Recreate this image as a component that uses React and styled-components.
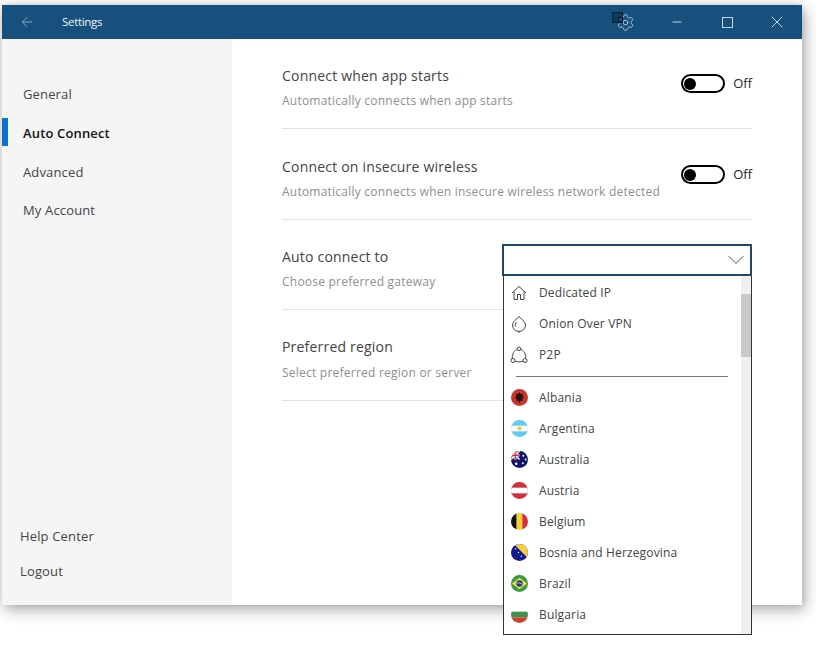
import React from "react";
import styled, { createGlobalStyle } from "styled-components";
import { ArrowLeft, Minus, X, Settings, ChevronDown } from "lucide-react";

const Global = createGlobalStyle`
  html, body { margin: 0; padding: 0; background: #fff; }
  body { font-family: "Open Sans", "Noto Sans", sans-serif; overflow: hidden; }
`;
const Page = styled.div`
  width: 816px; height: 655px; padding: 5px 0 0 2px; box-sizing: border-box;
`;
const Win = styled.div`
  width: 800px; height: 600px; display: flex; flex-direction: column; background: #fff;
  box-shadow: 3px 5px 14px rgba(0,0,0,.32), 0 -1px 6px rgba(0,0,0,.12);
`;
const TitleBar = styled.header`
  height: 34px; flex: none; background: #17507c; color: #f0f5f9; display: flex; align-items: center;
`;
const BackBtn = styled.div`
  width: 60px; padding-left: 17px; box-sizing: border-box; display: flex; color: #7fa6c4;
`;
const TitleText = styled.div`
  font-size: 11.5px; letter-spacing: -.3px; flex: 1; margin-top: -2px;
`;
const TrayIcon = styled.div`
  position: relative; width: 23px; height: 20px; margin-right: 17px; color: #a9c4d8; display: flex; justify-content: flex-end; align-items: center;
`;
const TrayBadge = styled.div`
  position: absolute; left: 0; top: 0; width: 9px; height: 9px; border: 1px solid #0b2436; background: #113a58;
  &::after { content: ""; position: absolute; right: -1px; bottom: 0; width: 3px; height: 3px; border: 1px solid #071a29; background: #17507c; }
`;
const WinBtn = styled.div`
  width: 50px; display: flex; justify-content: center; align-items: center; color: #c2d9ea;
`;
const Body = styled.div`
  flex: 1; display: flex; min-height: 0;
`;
const Side = styled.nav`
  width: 230px; flex: none; background: #f5f5f5; display: flex; flex-direction: column; justify-content: space-between; padding: 36px 0 17px; box-sizing: border-box;
`;
const NavList = styled.div`
  display: flex; flex-direction: column;
`;
const NavItem = styled.div`
  position: relative; height: 38.7px; display: flex; align-items: center; padding-left: 21px;
  font-size: 13px; letter-spacing: .15px; color: ${p => p.$active ? "#111" : "#444"}; font-weight: ${p => p.$active ? 600 : 400};
  box-sizing: border-box;
  ${p => p.$active ? `&::before { content: ""; position: absolute; left: 0; top: 4px; width: 6px; height: 28px; background: #0a74cc; }` : ""}
`;
const BottomLink = styled.div`
  height: 35px; display: flex; align-items: center; padding-left: 18px; font-size: 13px; letter-spacing: .15px; color: #444;
`;
const Main = styled.main`
  flex: 1; padding: 0 50px; min-width: 0;
`;
const Row = styled.section`
  height: ${p => p.$h}px; padding-top: ${p => p.$pad}px; box-sizing: border-box; border-bottom: 1px solid #e3e3e3; display: flex; justify-content: space-between; align-items: flex-start;
`;
const RowText = styled.div`
  display: flex; flex-direction: column; gap: ${p => p.$gap || 6}px;
`;
const RowTitle = styled.div`
  font-size: 14px; line-height: 19px; color: #444; letter-spacing: .2px;
`;
const RowSub = styled.div`
  font-size: 12px; line-height: 19px; color: #8f8f8f; letter-spacing: .23px;
`;
const ToggleWrap = styled.div`
  display: flex; align-items: center; gap: 8px; font-size: 13px; color: #222; margin-top: 8px; font-weight: 500;
`;
const Toggle = styled.div`
  width: 44px; height: 19px; border: 2px solid #000; border-radius: 11px; box-sizing: border-box; padding: 1.5px 1px;
  &::before { content: ""; display: block; width: 12px; height: 12px; background: #000; border-radius: 50%; }
`;
const OffLabel = styled.span`
  margin-top: -2px;
`;
const SelectBox = styled.div`
  position: relative; width: 250px; height: 32px; margin-top: -3px; box-sizing: border-box; border: 2px solid #1f4a68; background: #fff; display: flex; justify-content: flex-end; align-items: center; color: #555;
`;
const Menu = styled.div`
  position: absolute; left: -1px; top: 30px; width: 249px; height: 359px; box-sizing: border-box; background: #fff; border: 1px solid #333; border-top: 0; display: flex; overflow: hidden;
`;
const MenuList = styled.div`
  flex: 1; padding-top: 1px; min-width: 0;
`;
const Option = styled.div`
  height: 31px; display: flex; align-items: center; gap: 11px; padding-left: 6px; font-size: 12px; color: #444; letter-spacing: .15px;
`;
const OptIcon = styled.span`
  width: 18px; height: 18px; display: flex; justify-content: center; align-items: center; color: #444; flex: none;
`;
const MenuSep = styled.div`
  height: 1px; background: #777; margin: 6px 13px 5px 12px;
`;
const Scroll = styled.div`
  width: 10px; flex: none; background: #f0f0f0; padding-top: 18px; box-sizing: border-box;
`;
const Thumb = styled.div`
  height: 63px; background: #c9c9c9;
`;

const flags = {
  al: <><rect width="18" height="18" fill="#c9332a"/><path d="M9 3.500l1.500 2 2.500-.5-1 2.500 2 1.500-2 1 .5 2.500-2.500 0L9 15l-1-2.500-2.500 0 .5-2.500-2-1 2-1.500-1-2.500 2.500.5z" fill="#231512"/></>,
  ar: <><rect width="18" height="18" fill="#5fcbf0"/><rect y="6" width="18" height="6" fill="#fff"/><circle cx="9" cy="9" r="2.200" fill="#eec64c"/></>,
  au: <><rect width="18" height="18" fill="#12156e"/><path d="M0 0l9 9M9 0L0 9" stroke="#fff" strokeWidth="1.500"/><path d="M4.500 0v9M0 4.500h9" stroke="#fff" strokeWidth="2.600"/><path d="M4.500 0v9M0 4.500h9" stroke="#d63040" strokeWidth="1.400"/><circle cx="13" cy="5" r="1" fill="#fff"/><circle cx="15.500" cy="9" r="1" fill="#fff"/><circle cx="12.500" cy="13" r="1" fill="#fff"/><circle cx="5.500" cy="13.500" r="1.400" fill="#fff"/></>,
  at: <><rect width="18" height="18" fill="#d32f3a"/><rect y="6" width="18" height="6" fill="#fff"/></>,
  be: <><rect width="6" height="18" fill="#111"/><rect x="6" width="6" height="18" fill="#f5d438"/><rect x="12" width="6" height="18" fill="#e02a35"/></>,
  ba: <><rect width="18" height="18" fill="#101a8c"/><path d="M3 0H18V15z" fill="#f5cf3a"/><circle cx="5" cy="5" r=".7" fill="#fff"/><circle cx="8" cy="9" r=".7" fill="#fff"/><circle cx="11" cy="13" r=".7" fill="#fff"/></>,
  br: <><rect width="18" height="18" fill="#3d9a3d"/><path d="M9 3L17 9 9 15 1 9z" fill="#f3dd4a"/><circle cx="9" cy="9" r="3.400" fill="#1c3d8b"/><path d="M6 8.500q3-.8 6 1.300" stroke="#fff" strokeWidth=".7" fill="none"/></>,
  bg: <><rect width="18" height="18" fill="#fff"/><rect y="6" width="18" height="6" fill="#3d9151"/><rect y="12" width="18" height="6" fill="#d1402f"/></>,
};
const Flag = ({ code }) => (
  <svg width="17" height="17" viewBox="0 0 18 18">
    <clipPath id={"c" + code}><circle cx="9" cy="9" r="9"/></clipPath>
    <g clipPath={`url(#c${code})`}>{flags[code]}</g>
  </svg>
);
const SquareBtn = () => (
  <svg width="11" height="11" viewBox="0 0 11 11" fill="none" stroke="currentColor" strokeWidth="1">
    <rect x=".5" y=".5" width="10" height="10"/>
  </svg>
);
const Home = () => (
  <svg width="16" height="16" viewBox="0 0 16 16" fill="none" stroke="currentColor" strokeWidth="1">
    <path d="M1 8L8 1.500 15 8M3 6.500V14.500H6.500V9.500H9.500V14.500H13V6.500"/>
  </svg>
);
const Onion = () => (
  <svg width="18" height="18" viewBox="0 0 18 18" fill="none" stroke="currentColor" strokeWidth="1">
    <path d="M9 1.500C8.500 3.500 3 5 2.500 10a6.500 6.500 0 0 0 13 0C15 5 9.500 3.500 9 1.500z"/><path d="M9 16.500v1.300"/>
    <path d="M6.800 7C5.300 8.300 4.900 9.800 5.300 11.500"/>
  </svg>
);
const P2P = () => (
  <svg width="18" height="18" viewBox="0 0 18 18" fill="none" stroke="currentColor" strokeWidth="1">
    <circle cx="9" cy="2.800" r="1.800"/><circle cx="3" cy="14.500" r="2"/><circle cx="15" cy="14.500" r="2"/>
    <path d="M7.300 3.300C4.300 4.500 1.800 8 2.300 12.600M10.700 3.300c3 1.200 5.500 4.700 5 9.300M5 15c2.500 1.200 5.500 1.200 8 0"/>
  </svg>
);

const countries = [["al","Albania"],["ar","Argentina"],["au","Australia"],["at","Austria"],["be","Belgium"],["ba","Bosnia and Herzegovina"],["br","Brazil"],["bg","Bulgaria"]];

const SettingRow = ({ title, sub, h, pad, gap, children }) => (
  <Row $h={h} $pad={pad}>
    <RowText $gap={gap}><RowTitle>{title}</RowTitle><RowSub>{sub}</RowSub></RowText>
    {children}
  </Row>
);
const OffToggle = () => <ToggleWrap><Toggle /><OffLabel>Off</OffLabel></ToggleWrap>;

export default function App() {
  return (
    <Page>
      <Global />
      <Win>
        <TitleBar>
          <BackBtn><ArrowLeft size={16} strokeWidth={1} absoluteStrokeWidth /></BackBtn>
          <TitleText>Settings</TitleText>
          <TrayIcon><TrayBadge /><Settings size={19} strokeWidth={1} absoluteStrokeWidth /></TrayIcon>
          <WinBtn><Minus size={14} strokeWidth={1} absoluteStrokeWidth /></WinBtn>
          <WinBtn><SquareBtn /></WinBtn>
          <WinBtn><X size={20} strokeWidth={1} absoluteStrokeWidth /></WinBtn>
        </TitleBar>
        <Body>
          <Side>
            <NavList>
              <NavItem>General</NavItem>
              <NavItem $active>Auto Connect</NavItem>
              <NavItem>Advanced</NavItem>
              <NavItem>My Account</NavItem>
            </NavList>
            <NavList>
              <BottomLink>Help Center</BottomLink>
              <BottomLink>Logout</BottomLink>
            </NavList>
          </Side>
          <Main>
            <SettingRow h={90} pad={27} title="Connect when app starts" sub="Automatically connects when app starts"><OffToggle /></SettingRow>
            <SettingRow h={91} pad={28} title="Connect on insecure wireless" sub="Automatically connects when insecure wireless network detected"><OffToggle /></SettingRow>
            <SettingRow h={90} pad={27} title="Auto connect to" sub="Choose preferred gateway">
              <SelectBox>
                <ChevronDown size={28} strokeWidth={1} absoluteStrokeWidth />
                <Menu>
                  <MenuList>
                    <Option><OptIcon><Home /></OptIcon>Dedicated IP</Option>
                    <Option><OptIcon><Onion /></OptIcon>Onion Over VPN</Option>
                    <Option><OptIcon><P2P /></OptIcon>P2P</Option>
                    <MenuSep />
                    {countries.map(([c, n]) => <Option key={c}><OptIcon><Flag code={c} /></OptIcon>{n}</Option>)}
                  </MenuList>
                  <Scroll><Thumb /></Scroll>
                </Menu>
              </SelectBox>
            </SettingRow>
            <SettingRow h={91} pad={27} gap={7} title="Preferred region" sub="Select preferred region or server" />
          </Main>
        </Body>
      </Win>
    </Page>
  );
}
